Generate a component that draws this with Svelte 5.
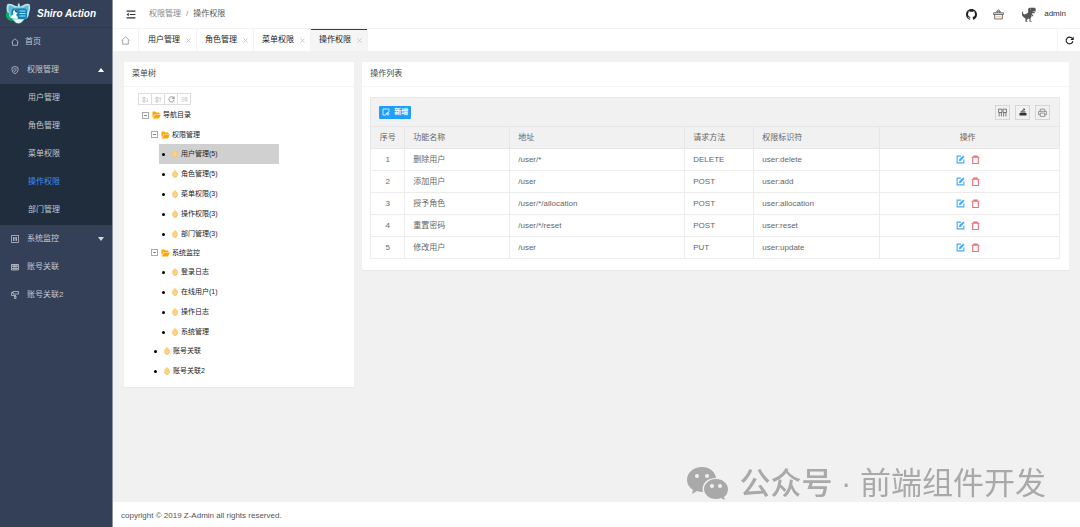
<script lang="ts">
	type TreeNode = { label: string; children?: TreeNode[] };

	let active = $state('操作权限');
	let selected = $state('用户管理(5)');

	const submenu = ['用户管理', '角色管理', '菜单权限', '操作权限', '部门管理'];
	const tabs = ['用户管理', '角色管理', '菜单权限', '操作权限'];

	const tree: TreeNode[] = [
		{
			label: '导航目录',
			children: [
				{
					label: '权限管理',
					children: [
						{ label: '用户管理(5)' },
						{ label: '角色管理(5)' },
						{ label: '菜单权限(3)' },
						{ label: '操作权限(3)' },
						{ label: '部门管理(3)' }
					]
				},
				{
					label: '系统监控',
					children: [
						{ label: '登录日志' },
						{ label: '在线用户(1)' },
						{ label: '操作日志' },
						{ label: '系统管理' }
					]
				},
				{ label: '账号关联' },
				{ label: '账号关联2' }
			]
		}
	];

	const rows = [
		{ name: '删除用户', url: '/user/*', method: 'DELETE', perm: 'user:delete' },
		{ name: '添加用户', url: '/user', method: 'POST', perm: 'user:add' },
		{ name: '授予角色', url: '/user/*/allocation', method: 'POST', perm: 'user:allocation' },
		{ name: '重置密码', url: '/user/*/reset', method: 'POST', perm: 'user:reset' },
		{ name: '修改用户', url: '/user', method: 'PUT', perm: 'user:update' }
	];
</script>

{#snippet house()}
	<svg class="icon-house" viewBox="0 0 16 16"><path d="M1 8 8 1.5 15 8M3 7v7.5h10V7" /></svg>
{/snippet}

{#snippet nodes(list: TreeNode[])}
	<ul>
		{#each list as node}
			<li>
				{#if node.children}
					<div class="node folder">
						<button class="fold" aria-label="收起"></button>
						<svg class="folder-icon" viewBox="0 0 18 16">
							<path d="M1 2.500Q1 1 2.500 1H6.500L8.500 3H13.500Q15 3 15 4.500V6H5.500L1 13.500Z" />
							<path d="M6 7H17.500L14.500 14Q14 15 13 15H1.500Z" />
						</svg>
						<span>{node.label}</span>
					</div>
					{@render nodes(node.children)}
				{:else}
					<button class="node leaf" class:selected={selected === node.label} onclick={() => (selected = node.label)}>
						<i class="dot"></i>
						<svg class="leaf-icon" viewBox="0 0 12 16">
							<path d="M6 .5 11 6v5q-1 4-5 4.500Q2 15 1 11V6Z" fill="#ffdf9e" />
							<path d="M6 1 1.500 6v5q1 3.500 4.500 4 3.500-.5 4.500-4V6ZM3 8l3-3 4 4M3 12l5-5M6 14l4-3" fill="none" stroke="#f9b545" stroke-width="1.300" />
						</svg>
						<span>{node.label}</span>
					</button>
				{/if}
			</li>
		{/each}
	</ul>
{/snippet}

<div class="layout">
	<aside>
		<a class="logo" href="/">
			<svg viewBox="0 0 52 42">
				<path d="M5 2Q13 0 19 5L25 7L26 1H29L30 7L35 5Q41 0 49 2Q52 10 48 20Q48 31 38 33Q33 41 27 41Q20 40 17 35Q6 33 5 20Q1 10 5 2Z" fill="#b5e2ef" />
				<path d="M8 5Q14 4 18 9H37Q41 4 47 5Q48 14 44 20Q43 30 36 31H17Q9 29 9 20Q5 13 8 5Z" fill="#58bcdd" />
				<rect x="13" y="11" width="31" height="21" rx="5" fill="#1482b8" />
				<path d="M29 16H41M29 21H41M29 26H41" stroke="#a9e6f7" stroke-width="2" />
				<path d="M11 31Q12 24 17 22Q14 18 18 14Q24 12 25 18Q25 22 22 24Q26 26 26 32Z" fill="#f4fbfd" />
				<path d="M19 14q6-1 6 6l-4-2z" fill="#164667" />
				<path d="M3 18Q0 25 4 31Q9 37 17 35L15 31Q7 30 8 20Z" fill="#08ae58" />
				<path d="M20 34H36L31 38Q27 41 22 38Z" fill="#e9fbff" />
			</svg>
			<span>Shiro Action</span>
		</a>
		<nav>
			<a class="item" href="#home">
				{@render house()}
				<span>首页</span>
			</a>
			<a class="item parent" href="#permission">
				<svg viewBox="0 0 16 16"><path d="M8 1 14 3V8Q14 13 8 15.500Q2 13 2 8V3Z" /><path d="M5 6h6M5 9l2 2 4-3" /></svg>
				<span>权限管理</span>
				<i class="arrow up"></i>
			</a>
			<div class="submenu">
				{#each submenu as name}
					<a class="item" class:active={active === name} href="#{name}" onclick={() => (active = name)}>{name}</a>
				{/each}
			</div>
			<a class="item parent" href="#monitor">
				<svg viewBox="0 0 16 16"><path d="M1 1h14v14H1zM5 4v8M8 4v8M11 4v8M4 9h2M7 6h3M10 9h2" /></svg>
				<span>系统监控</span>
				<i class="arrow"></i>
			</a>
			<a class="item parent" href="#account">
				<svg viewBox="0 0 16 16"><path d="M1 3h14v11H1zM1 4h14M1 7h14M1 11h14M6 4v10M10 4v10" /></svg>
				<span>账号关联</span>
			</a>
			<a class="item parent" href="#account2">
				<svg viewBox="0 0 16 16"><path d="M4 1h11v5H4zM4 3H1v6h8v2M7 10h3v5H7z" /></svg>
				<span>账号关联2</span>
			</a>
		</nav>
	</aside>

	<div class="page">
		<header>
			<button class="toggle" aria-label="折叠菜单">
				<svg viewBox="0 0 18 16"><path d="M1 2h16M7 8h10M1 14h16" /><path class="solid" d="M1 8l4-3v6z" /></svg>
			</button>
			<div class="breadcrumb">
				<a href="#permission">权限管理</a>
				<span>/</span>
				<b>操作权限</b>
			</div>
			<div class="tools">
				<a href="#github" aria-label="GitHub">
					<svg class="github" viewBox="0 0 16 16">
						<path d="M8 0C3.580 0 0 3.580 0 8c0 3.540 2.290 6.530 5.470 7.590.4.070.55-.17.55-.38 0-.19-.01-.82-.01-1.490-2.010.37-2.530-.49-2.690-.94-.09-.23-.48-.94-.82-1.130-.28-.15-.68-.52-.01-.53.63-.01 1.080.58 1.230.82.72 1.210 1.870.87 2.330.66.07-.52.28-.87.51-1.070-1.780-.2-3.640-.89-3.640-3.950 0-.87.31-1.590.82-2.150-.08-.2-.36-1.020.08-2.120 0 0 .67-.21 2.200.82.640-.18 1.320-.27 2-.27s1.360.09 2 .27c1.530-1.040 2.200-.82 2.200-.82.44 1.100.16 1.920.08 2.120.51.56.82 1.270.82 2.150 0 3.070-1.870 3.750-3.650 3.950.29.25.54.73.54 1.480 0 1.070-.01 1.930-.01 2.200 0 .21.15.46.55.38A8 8 0 0 0 16 8c0-4.420-3.580-8-8-8z" />
					</svg>
				</a>
				<a href="#gitee" aria-label="主页">
					<svg class="basket" viewBox="0 0 20 20"><path d="M1 8h18v3H1zM3 11v8h14v-8M5 8l5-6 5 6M8 8V5h4v3" /><path d="M5 15h10" stroke="#e8b184" /></svg>
				</a>
				<svg class="dino" viewBox="0 0 44 44">
					<path d="M25 2H41L43 5V13H35V15H40V18H32V22H36V27H33V24H31V28L28 33V41H31V43H25V35L21 34L17 38V41H19V43H13V34L7 29L3 24V14H6V19L10 22L16 20L21 16V5Z" />
					<path d="M27 5h2v2h-2z" fill="#fff" />
				</svg>
				<a class="user" href="#user">admin</a>
			</div>
		</header>

		<div class="tabs">
			<a class="home" href="#home" aria-label="首页">{@render house()}</a>
			{#each tabs as tab}
				<div class="tab" class:current={active === tab}>
					<a href="#{tab}" onclick={() => (active = tab)}>{tab}</a>
					<button aria-label="关闭{tab}">
						<svg viewBox="0 0 10 10"><path d="M1 1l8 8M9 1 1 9" /></svg>
					</button>
				</div>
			{/each}
			<button class="refresh" aria-label="刷新">
				<svg viewBox="0 0 16 16"><path d="M13 4.500A6 6 0 1 0 14 9" /><path class="solid" d="M15.500 1v6h-6z" /></svg>
			</button>
		</div>

		<main>
			<div class="side-col">
				<section class="card">
					<h2>菜单树</h2>
					<div class="tree">
						<div class="tree-bar">
							<button aria-label="展开"><svg viewBox="0 0 16 16"><path d="M2 3h5v4H2zM2 10h5v4H2zM12 5v8M10 11l2 2 2-2" /></svg></button>
							<button aria-label="收起"><svg viewBox="0 0 16 16"><path d="M2 3h5v4H2zM2 10h5v4H2zM12 13V4M10 6l2-2 2 2" /></svg></button>
							<button aria-label="刷新"><svg class="dark" viewBox="0 0 16 16"><path d="M13.500 5A6 6 0 1 0 14 9M14 1v5H9" /></svg></button>
							<button aria-label="搜索"><svg viewBox="0 0 16 16"><path d="M1 4h7M1 8h5M1 12h7M9 4h5v6H9zM12 10l3 3" /></svg></button>
						</div>
						{@render nodes(tree)}
					</div>
				</section>
			</div>

			<div class="main-col">
				<section class="card">
					<h2>操作列表</h2>
					<div class="grid">
						<div class="grid-bar">
							<button class="add">
								<svg viewBox="0 0 16 16"><path d="M14 8V2H2v12h6M8 14l1-4 5-2M12 9v6M9 12h6" /></svg>
								新增
							</button>
							<button class="tool first" aria-label="筛选列"><svg viewBox="0 0 16 16"><path d="M1 2h6v6H1zM9 2h6v6H9zM2 8v7M6 8v7M10 8v7M14 8v7" /></svg></button>
							<button class="tool" aria-label="导出"><svg class="export" viewBox="0 0 16 16"><path class="solid" d="M1 10h14v5H1zM3 7h10v2H3z" /><path d="M6 7q0-4 5-4M9 1l3 2-3 2" /></svg></button>
							<button class="tool" aria-label="打印"><svg class="print" viewBox="0 0 16 16"><path d="M4 6V2h8v4M4 12H1V6h14v6h-3M4 9h8v6H4z" /></svg></button>
						</div>
						<table>
							<colgroup>
								<col class="c-index" />
								<col class="c-name" />
								<col class="c-url" />
								<col class="c-method" />
								<col class="c-perm" />
								<col />
							</colgroup>
							<thead>
								<tr>
									<th class="center">序号</th>
									<th>功能名称</th>
									<th>地址</th>
									<th>请求方法</th>
									<th>权限标识符</th>
									<th class="center operate">操作</th>
								</tr>
							</thead>
							<tbody>
								{#each rows as row, i}
									<tr>
										<td class="center">{i + 1}</td>
										<td>{row.name}</td>
										<td>{row.url}</td>
										<td>{row.method}</td>
										<td>{row.perm}</td>
										<td class="center operate">
											<div class="actions">
												<button class="edit" aria-label="编辑{row.name}"><svg viewBox="0 0 16 16"><path d="M9 2H2v12h12V8" /><path d="M5 11l1-4 7-6 2 2-6 7z" class="solid" /></svg></button>
												<button class="delete" aria-label="删除{row.name}"><svg viewBox="0 0 16 16"><path d="M1 4h14M5 4V2h6v2M3 4v11h10V4" /></svg></button>
											</div>
										</td>
									</tr>
								{/each}
							</tbody>
						</table>
					</div>
				</section>
			</div>
		</main>

		<footer>copyright © 2019 Z-Admin all rights reserved.</footer>
	</div>

	<div class="watermark">
		<svg viewBox="0 0 42 34">
			<path d="M15 0C6 0 0 6 0 13c0 4 2 7 6 10l-1 4 5-3q3 1 6 1C14 17 20 11 29 11 28 4 22 0 15 0Z" />
			<path d="M29 12c-7 0-12 5-12 10s5 10 12 10q3 0 5-1l4 2-1-3q4-3 4-8c0-5-5-10-12-10Z" />
			<g fill="#f1f1f1"><circle cx="10" cy="9" r="2" /><circle cx="20" cy="9" r="2" /><circle cx="25" cy="19" r="2" /><circle cx="33" cy="19" r="2" /></g>
		</svg>
		<span><b>公众号</b> · 前端组件开发</span>
	</div>
</div>

<style>
	:global(body) {
		font-family: 'Liberation Sans', 'Noto Sans CJK SC', sans-serif;
		font-size: 8px;
		line-height: 12px;
		color: #333;
		background: #f1f1f1;
	}

	.layout {
		display: flex;
		min-height: 100vh;
	}

	a {
		color: inherit;
		text-decoration: none;
	}

	button {
		display: flex;
		align-items: center;
		justify-content: center;
		padding: 0;
		border: 0;
		background: none;
		color: inherit;
		font: inherit;
		cursor: pointer;
	}

	svg {
		flex: none;
		fill: none;
		stroke: currentColor;
		stroke-width: 1.5;
	}

	.solid {
		fill: currentColor;
		stroke: none;
	}

	aside {
		flex: none;
		width: 113px;
		box-sizing: border-box;
		background: #344058;
		border-right: 1px solid #8d94a2;
	}

	.logo {
		display: flex;
		align-items: center;
		gap: 6px;
		height: 28px;
		padding-left: 5px;
		box-sizing: border-box;
		border-bottom: 1px solid #2e394f;
		color: #fff;
		font-size: 10px;
		font-weight: bold;
		font-style: italic;
	}

	.logo svg {
		width: 26px;
		height: 21px;
		stroke: none;
	}

	.item {
		display: flex;
		align-items: center;
		gap: 6px;
		height: 28px;
		padding: 0 8px 0 11px;
		color: #c3c8d0;
	}

	.item svg {
		width: 8px;
		height: 8px;
	}

	.parent {
		gap: 8px;
	}

	.submenu {
		padding-bottom: 1px;
		background: #1f2d3d;
	}

	.submenu .item {
		padding-left: 28px;
	}

	.submenu .active {
		color: #3d8ff0;
	}

	.arrow {
		margin-left: auto;
		border: 3px solid transparent;
		border-top: 4px solid #d5d8de;
		border-bottom: 0;
	}

	.arrow.up {
		border-top: 0;
		border-bottom: 4px solid #fff;
	}

	.page {
		display: flex;
		flex: 1;
		flex-direction: column;
		min-width: 0;
	}

	header {
		display: flex;
		align-items: center;
		height: 28px;
		padding: 0 14px 0 13px;
		background: #fff;
	}

	.toggle svg {
		width: 10px;
		height: 9px;
		stroke-width: 2;
	}

	.breadcrumb {
		display: flex;
		gap: 5px;
		margin-left: 13px;
		color: #888;
	}

	.breadcrumb b {
		font-weight: normal;
		color: #555;
	}

	.tools {
		display: flex;
		align-items: center;
		margin-left: auto;
	}

	.tools svg {
		display: block;
	}

	.github {
		width: 11px;
		height: 11px;
		margin-right: 16px;
		fill: #222;
		stroke: none;
	}

	.basket {
		width: 11px;
		height: 12px;
		margin-right: 17px;
		color: #555;
	}

	.dino {
		width: 15px;
		height: 15px;
		margin-right: 8px;
		fill: #555;
		stroke: none;
	}

	.tabs {
		display: flex;
		height: 22px;
		border-top: 1px solid #f3f3f3;
		background: #fff;
		color: #222;
	}

	.home,
	.refresh {
		display: flex;
		align-items: center;
		justify-content: center;
		width: 26px;
		box-sizing: border-box;
		border-right: 1px solid #f3f3f3;
	}

	.home svg {
		width: 9px;
		height: 9px;
		color: #666;
		stroke-width: 1;
	}

	.tab {
		display: flex;
		align-items: center;
		gap: 6px;
		padding: 0 5px 0 8px;
		border-right: 1px solid #f3f3f3;
	}

	.tab:first-of-type {
		padding-left: 9px;
	}

	.tab svg {
		width: 5px;
		height: 5px;
		color: #bbb;
	}

	.tab.current {
		background: #f5f5f5;
		box-shadow: inset 0 1px #3d3c4c;
	}

	.refresh {
		width: 23px;
		margin-left: auto;
		border-right: 0;
		border-left: 1px solid #f3f3f3;
	}

	.refresh svg {
		width: 9px;
		height: 9px;
		stroke-width: 2;
	}

	main {
		display: flex;
		flex: 1;
		align-items: flex-start;
		padding: 11px 7px;
	}

	.side-col,
	.main-col {
		box-sizing: border-box;
		width: 25%;
		padding: 0 4px;
	}

	.main-col {
		width: 75%;
	}

	.card {
		background: #fff;
		border-radius: 1px;
		box-shadow: 0 1px 1px #e6e6e6;
	}

	h2 {
		margin: 0;
		padding: 0 8px;
		border-bottom: 1px solid #f4f4f4;
		font-size: 8px;
		font-weight: normal;
		line-height: 24px;
		color: #444;
	}

	.tree {
		padding: 6px 14px;
		font-size: 7px;
		color: #222;
	}

	.tree-bar {
		display: flex;
		width: max-content;
		border: 1px solid #ddd;
	}

	.tree-bar button {
		width: 13px;
		height: 10px;
		box-sizing: border-box;
		border-right: 1px solid #ddd;
		color: #999;
	}

	.tree-bar button:last-child {
		width: 12px;
		border-right: 0;
	}

	.tree-bar svg {
		width: 7px;
		height: 7px;
		stroke-width: 1;
	}

	.tree-bar .dark {
		color: #666;
		stroke-width: 1.5;
	}

	ul {
		margin: 0;
		padding: 0 0 0 4px;
		list-style: none;
	}

	ul ul {
		padding-left: 9px;
	}

	ul ul ul {
		margin-bottom: -1px;
		padding-left: 8px;
	}

	.node {
		display: flex;
		align-items: center;
		width: 120px;
		height: 20px;
	}

	.folder {
		height: 20px;
	}

	ul ul .folder {
		height: 19px;
	}

	.fold {
		width: 7px;
		height: 7px;
		margin-right: 3px;
		box-sizing: border-box;
		border: 1px solid #aaa;
	}

	.fold::before {
		content: '';
		width: 3px;
		height: 1px;
		background: #888;
	}

	.folder-icon {
		width: 9px;
		height: 8px;
		margin-right: 2px;
		fill: #ffa500;
		stroke: none;
	}

	.leaf {
		justify-content: flex-start;
	}

	.selected {
		background: #d0d0d0;
	}

	.dot {
		width: 3px;
		height: 3px;
		margin: 0 7px 0 3px;
		border-radius: 50%;
		background: #000;
	}

	.leaf-icon {
		width: 6px;
		height: 8px;
		margin-right: 3px;
		stroke: none;
	}

	.grid {
		margin: 0 9px 0 8px;
		padding: 10px 0 11px;
		color: #666;
	}

	.grid-bar {
		display: flex;
		align-items: center;
		gap: 5px;
		height: 28px;
		padding: 0 9px 0 8px;
		border: 1px solid #e8e8e8;
		border-bottom: 0;
		background: #f1f1f1;
	}

	.add {
		gap: 4px;
		width: 32px;
		height: 13px;
		border-radius: 1px;
		background: #1e9fff;
		color: #fff;
		font-size: 7px;
		font-weight: bold;
	}

	.add svg {
		width: 8px;
		height: 8px;
	}

	.tool {
		width: 15px;
		height: 15px;
		box-sizing: border-box;
		border: 1px solid #d6d6d6;
	}

	.tool.first {
		margin-left: auto;
	}

	.tool svg {
		width: 9px;
		height: 9px;
	}

	.tool .export {
		width: 8px;
		height: 8px;
		color: #333;
	}

	.tool .print {
		color: #888;
	}

	table {
		width: 100%;
		table-layout: fixed;
		border-collapse: collapse;
	}

	.c-index {
		width: 34px;
	}

	.c-name {
		width: 105px;
	}

	.c-url {
		width: 175px;
	}

	.c-method {
		width: 69px;
	}

	.c-perm {
		width: 126px;
	}

	th,
	td {
		height: 22px;
		padding: 0 8px;
		box-sizing: border-box;
		border: 1px solid #ececec;
		font-weight: normal;
		text-align: left;
	}

	th {
		border-color: #e6e6e6;
		background: #f1f1f1;
	}

	.center {
		padding: 0;
		text-align: center;
	}

	.operate {
		padding-right: 4px;
	}

	.actions {
		display: flex;
		justify-content: center;
		gap: 6px;
	}

	.actions svg {
		width: 9px;
		height: 9px;
		stroke-width: 2;
	}

	.edit {
		color: #4aa8fb;
	}

	.delete {
		color: #f56c7a;
	}

	footer {
		padding: 2px 8px 0;
		background: #fff;
		line-height: 23px;
		color: #555;
	}

	.watermark {
		position: fixed;
		right: 34px;
		bottom: 20px;
		display: flex;
		align-items: center;
		gap: 10px;
		color: #a9a9a9;
		font-size: 31px;
		line-height: 46px;
		pointer-events: none;
	}

	.watermark b {
		font-weight: 500;
	}

	.watermark svg {
		width: 42px;
		height: 34px;
		fill: currentColor;
		stroke: none;
	}
</style>
